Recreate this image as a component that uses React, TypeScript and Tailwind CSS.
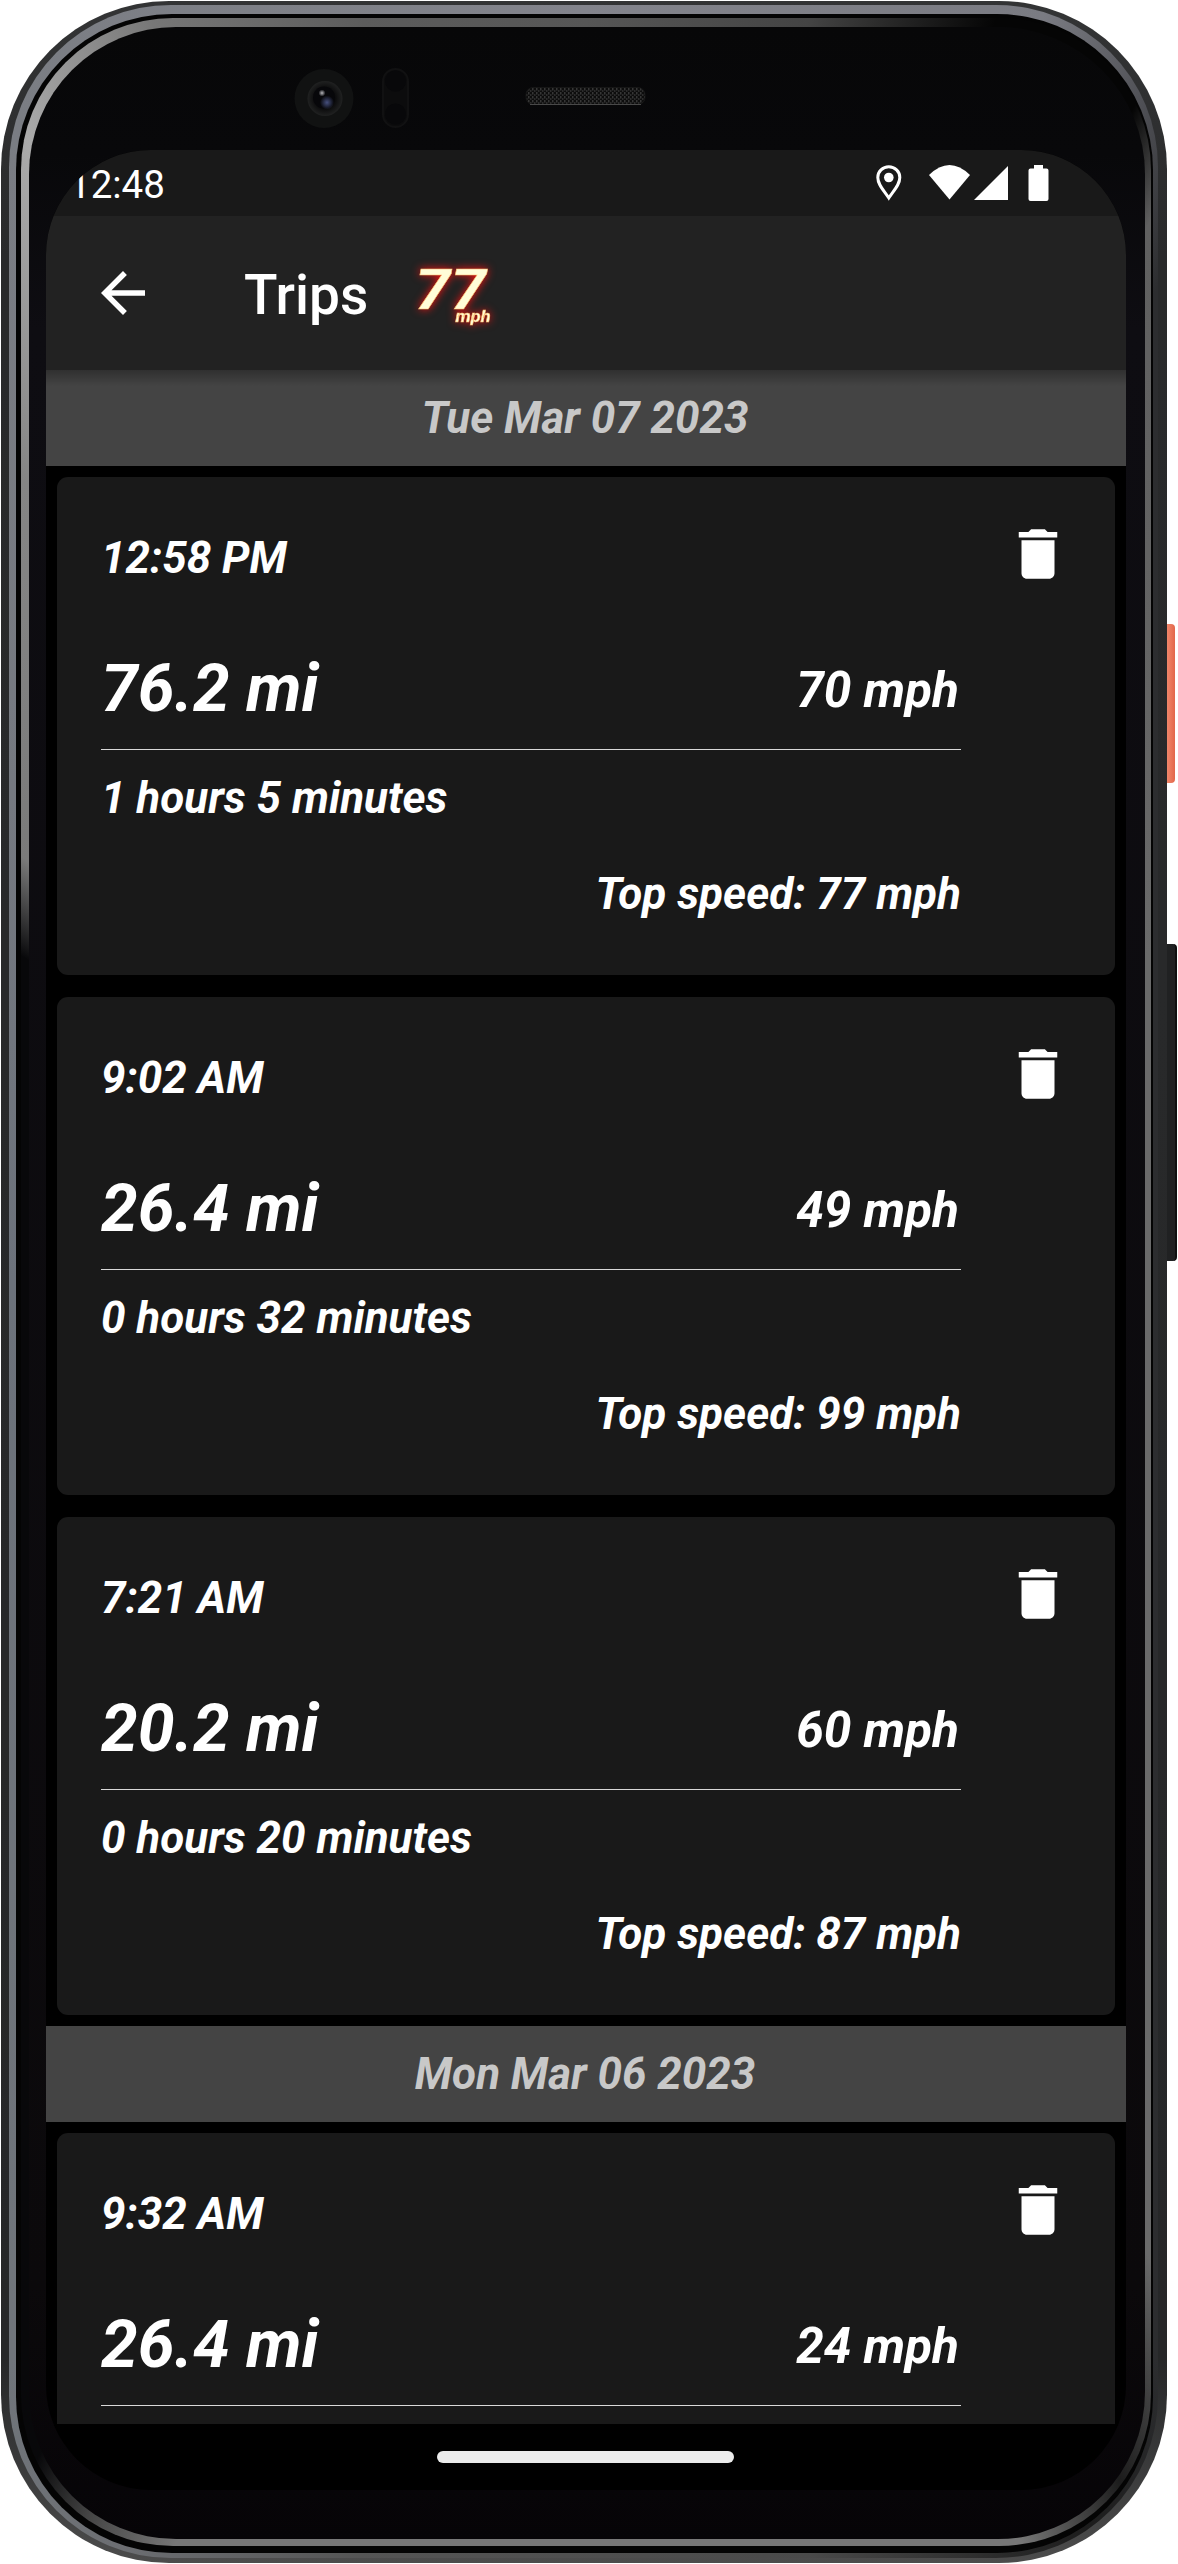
type Trip = {
  time: string;
  distance: string;
  average: string;
  duration?: string;
  top?: string;
};

const DAYS: { date: string; trips: Trip[] }[] = [
  {
    date: "Tue Mar 07 2023",
    trips: [
      { time: "12:58 PM", distance: "76.2 mi", average: "70 mph", duration: "1 hours 5 minutes", top: "77 mph" },
      { time: "9:02 AM", distance: "26.4 mi", average: "49 mph", duration: "0 hours 32 minutes", top: "99 mph" },
      { time: "7:21 AM", distance: "20.2 mi", average: "60 mph", duration: "0 hours 20 minutes", top: "87 mph" },
    ],
  },
  {
    date: "Mon Mar 06 2023",
    trips: [{ time: "9:32 AM", distance: "26.4 mi", average: "24 mph" }],
  },
];

function Sensors() {
  return (
    <svg width="380" height="72" viewBox="290 62 380 72" className="ml-[261px] mt-[35px] block">
      <defs>
        <radialGradient id="lens">
          <stop offset="0" stopColor="#050506" />
          <stop offset="0.6" stopColor="#0c0c0d" />
          <stop offset="1" stopColor="#202121" />
        </radialGradient>
        <radialGradient id="glint">
          <stop offset="0" stopColor="#b8b8bd" />
          <stop offset="1" stopColor="#b8b8bd" stopOpacity="0" />
        </radialGradient>
        <radialGradient id="blue">
          <stop offset="0" stopColor="#46507e" />
          <stop offset="1" stopColor="#46507e" stopOpacity="0" />
        </radialGradient>
        <pattern id="mesh" width="4" height="4" patternUnits="userSpaceOnUse">
          <rect width="4" height="4" fill="#0d0d0d" />
          <rect width="1.5" height="2.5" fill="#363636" />
          <rect x="2" y="2" width="1.5" height="2" fill="#2c2c2c" />
        </pattern>
      </defs>
      <circle cx="324" cy="98.500" r="29.500" fill="#111212" />
      <circle cx="325" cy="98.500" r="17.500" fill="url(#lens)" />
      <circle cx="324" cy="97.500" r="11" fill="#07070a" />
      <circle cx="327" cy="102.500" r="7" fill="url(#blue)" />
      <circle cx="322" cy="93" r="3.500" fill="url(#glint)" />
      <rect x="383" y="69" width="25" height="58" rx="12.500" fill="#0c0c0d" stroke="#111112" strokeWidth="2" />
      <circle cx="395.500" cy="81" r="10.500" fill="#08080a" />
      <circle cx="395.500" cy="114" r="10.500" fill="#08080a" />
      <rect x="526" y="87.500" width="119" height="17" rx="7" fill="url(#mesh)" stroke="#161616" />
      <path d="M530 104.500h111" stroke="#484848" />
    </svg>
  );
}

function StatusBar() {
  return (
    <div className="flex h-[66px] items-center justify-between bg-[#191919] pl-[23px] pr-[76px]">
      <span className="mt-1 text-[38.5px] leading-[48px]">12:48</span>
      <svg width="174" height="36" viewBox="0 0 174 36" fill="#fff">
        <path d="M12.800 1.800c-6.100 0-11 4.700-11 10.600 0 7 5.500 12.400 11 20.600 5.500-8.200 11-13.600 11-20.600 0-5.900-4.900-10.600-11-10.600z" fill="none" stroke="#fff" strokeWidth="3" />
        <circle cx="12.800" cy="12.500" r="4.800" />
        <path d="M53 10Q73.500-10 94 10L73.500 34.500z" />
        <path d="M98 35h34V1z" />
        <path d="M158 0h9v3.500h3.500a2 2 0 0 1 2 2V34a2 2 0 0 1-2 2h-16a2 2 0 0 1-2-2V5.500a2 2 0 0 1 2-2h3.500z" />
      </svg>
    </div>
  );
}

function Header() {
  return (
    <div className="flex h-[154px] items-center bg-[#222] pl-[44px]">
      <svg width="66" height="66" viewBox="0 0 24 24" fill="#fff">
        <path d="M20 11H7.830l5.590-5.590L12 4l-8 8 8 8 1.410-1.410L7.830 13H20v-2z" />
      </svg>
      <h1 className="ml-[88px] mt-1 text-[55px] font-medium leading-[66px]">Trips</h1>
      <svg
        width="110"
        height="90"
        viewBox="400 248 110 90"
        className="ml-[34px] overflow-visible font-['Roboto',sans-serif] font-bold italic drop-shadow-[0_0_4px_#ff1010]"
        fill="#fffdd8"
        stroke="#ffc070"
        strokeWidth="0.5"
      >
        <text x="413" y="309" fontSize="55" textLength="71" lengthAdjust="spacingAndGlyphs">77</text>
        <text x="453.500" y="322" fontSize="16" textLength="35" lengthAdjust="spacingAndGlyphs">mph</text>
      </svg>
    </div>
  );
}

function TripCard({ trip }: { trip: Trip }) {
  return (
    <div className="mx-[11px] mb-[22px] flex h-[498px] items-start justify-between rounded-[11px] bg-[#191919] p-[44px] text-[44px] font-bold italic last:mb-[11px]">
      <div className="w-[860px]">
        <p className="pt-1 leading-[66px]">{trip.time}</p>
        <div className="mt-[37px] flex h-[122px] items-center justify-between border-b border-[#d8d8d8]">
          <span className="text-[66px]">{trip.distance}</span>
          <span className="mr-[2px] mt-1 text-[49.5px]">{trip.average}</span>
        </div>
        {trip.duration && <p className="mt-[22px] leading-[52px]">{trip.duration}</p>}
        {trip.top && <p className="mt-[44px] text-right leading-[52px]">Top speed: {trip.top}</p>}
      </div>
      <svg width="66" height="66" viewBox="0 0 24 24" fill="#fff">
        <path d="M6 19c0 1.100.9 2 2 2h8c1.100 0 2-.9 2-2V7H6v12zM19 4h-3.500l-1-1h-5l-1 1H5v2h14V4z" />
      </svg>
    </div>
  );
}

function TripsScreen() {
  return (
    <div className="flex h-[2340px] w-[1080px] flex-col overflow-hidden rounded-[105px] bg-black text-white">
      <StatusBar />
      <Header />
      <div className="relative h-[2054px] overflow-hidden">
        <div className="absolute inset-x-0 top-0 h-4 bg-gradient-to-b from-black/30 to-transparent" />
        {DAYS.map((day) => (
          <section key={day.date}>
            <h2 className="mb-[11px] bg-[#444] pr-[2px] text-center text-[44px] font-bold italic leading-[96px] text-[#c8c8c8]">{day.date}</h2>
            {day.trips.map((trip) => (
              <TripCard key={trip.time} trip={trip} />
            ))}
          </section>
        ))}
      </div>
      <div className="flex h-[66px] items-center justify-center pr-px">
        <div className="h-3 w-[297px] rounded-full bg-[#ececec]" />
      </div>
    </div>
  );
}

export default function App() {
  return (
    <div className="relative h-[2564px] w-[1178px] overflow-hidden bg-white pl-px pt-px font-['Roboto',sans-serif]">
      {/* power and volume keys */}
      <div className="absolute left-[1160px] top-[624px] h-[159px] w-[15px] rounded-[4px] bg-gradient-to-r from-[#d9573c] via-[#f08468] to-[#e2674b]" />
      <div className="absolute left-[1160px] top-[944px] h-[317px] w-[17px] rounded-[4px] border-r-2 border-[#101010] bg-[#202122]" />

      {/* phone body, from the outer shell in to the glass */}
      <div className="relative h-[2562px] w-[1166px] rounded-[168px] bg-[linear-gradient(#333435,#292a2b_10%,#262728_92%,#4c4c4c)] pl-[8px] pt-[4px]">
        <div className="h-[2553px] w-[1149px] rounded-[162px] bg-[conic-gradient(#83848c,#7a7b82_20deg,#4a4b50_26deg,#2c2d2f_30deg,#2c2d2f_152deg,#1c1c1c_158deg,#4a4a4a_170deg,#555_190deg,#6c6e72_200deg,#70757b_208deg,#6c727b_270deg,#7a7d83_334deg,#83848c)] pl-[7px] pt-[9px]">
          <div className="h-[2539px] w-[1137px] rounded-[156px] bg-[#040404] pl-[5px] pt-[4px]">
            <div className="h-[2528px] w-[1130px] rounded-[152px] bg-[conic-gradient(#565656,#444_10deg,#050505_18deg,#050505_25deg,#606060_28deg,#6a6a6a_60deg,#6a6a6a_150deg,#1c1c1c_156deg,#777_161deg,#777_198deg,#444_202deg,#08080a_205deg,#08080a_300deg,#7a7a7a_307deg,#858585_325deg,#aaa_334deg,#777_341deg,#5c5c5c_350deg,#565656)] pl-[8px] pt-[9px]">
              <div className="h-[2512px] w-[1116px] rounded-[147px] bg-[linear-gradient(#070708,#08080a_5%,#0e0d12_12%,#0b090b_90%,#060407)] pl-[17px]">
                <div className="-ml-[17px] h-[123px] overflow-hidden">
                  <Sensors />
                </div>
                <TripsScreen />
              </div>
            </div>
          </div>
        </div>
      </div>
    </div>
  );
}
